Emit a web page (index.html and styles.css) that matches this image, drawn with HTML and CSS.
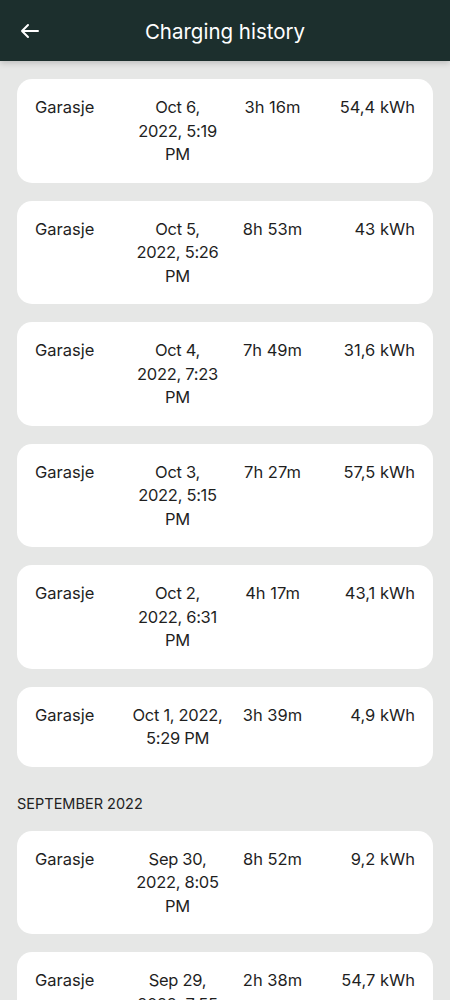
FILE: index.html
```html
<!DOCTYPE html>
<html lang="en">
<head>
  <meta charset="UTF-8">
  <meta name="viewport" content="width=device-width, initial-scale=1.0">
  <title>Charging history</title>
  <link rel="stylesheet" href="styles.css">
</head>
<body>
  <!-- Top bar -->
  <header class="topbar">
    <button class="back" aria-label="Back">
      <svg width="20" height="16" viewBox="0 0 20 16" fill="none" stroke="#fff" stroke-width="2" stroke-linecap="round" stroke-linejoin="round">
        <path d="M18 8H2M8 2L2 8l6 6"/>
      </svg>
    </button>
    <h1>Charging history</h1>
  </header>

  <!-- Sessions list -->
  <main class="list">
    <div class="session">
      <span class="place">Garasje</span>
      <span class="date">Oct 6,<br>2022, 5:19<br>PM</span>
      <span class="time">3h 16m</span>
      <span class="energy">54,4 kWh</span>
    </div>
    <div class="session">
      <span class="place">Garasje</span>
      <span class="date">Oct 5,<br>2022, 5:26<br>PM</span>
      <span class="time">8h 53m</span>
      <span class="energy">43 kWh</span>
    </div>
    <div class="session">
      <span class="place">Garasje</span>
      <span class="date">Oct 4,<br>2022, 7:23<br>PM</span>
      <span class="time">7h 49m</span>
      <span class="energy">31,6 kWh</span>
    </div>
    <div class="session">
      <span class="place">Garasje</span>
      <span class="date">Oct 3,<br>2022, 5:15<br>PM</span>
      <span class="time">7h 27m</span>
      <span class="energy">57,5 kWh</span>
    </div>
    <div class="session">
      <span class="place">Garasje</span>
      <span class="date">Oct 2,<br>2022, 6:31<br>PM</span>
      <span class="time">4h 17m</span>
      <span class="energy">43,1 kWh</span>
    </div>
    <div class="session">
      <span class="place">Garasje</span>
      <span class="date">Oct 1, 2022,<br>5:29 PM</span>
      <span class="time">3h 39m</span>
      <span class="energy">4,9 kWh</span>
    </div>

    <h2 class="month">SEPTEMBER 2022</h2>

    <div class="session">
      <span class="place">Garasje</span>
      <span class="date">Sep 30,<br>2022, 8:05<br>PM</span>
      <span class="time">8h 52m</span>
      <span class="energy">9,2 kWh</span>
    </div>
    <div class="session">
      <span class="place">Garasje</span>
      <span class="date">Sep 29,<br>2022, 7:55<br>PM</span>
      <span class="time">2h 38m</span>
      <span class="energy">54,7 kWh</span>
    </div>
  </main>
</body>
</html>
```

FILE: styles.css
```css
/* Base */
body {
  margin: 0;
  background: #e6e7e6;
  font-family: 'Inter', 'Roboto', sans-serif;
  color: #1f1f1f;
  height: 1000px;
  overflow: hidden;
}

/* Top bar */
.topbar {
  height: 61px;
  background: #1c2f2d;
  display: flex;
  align-items: center;
  justify-content: center;
  position: relative;
  box-shadow: 0 2px 6px rgba(0, 0, 0, 0.18);
}

.topbar h1 {
  margin: 0 0 -2px;
  font-size: 20.5px;
  font-weight: 400;
  color: #fff;
}

.back {
  position: absolute;
  left: 12px;
  top: 15px;
  width: 36px;
  height: 32px;
  padding: 0;
  border: none;
  background: none;
  display: flex;
  align-items: center;
  justify-content: center;
}

/* List */
.list {
  padding: 18px 17px;
  display: flex;
  flex-direction: column;
  gap: 18px;
}

.session {
  background: #fff;
  border-radius: 15px;
  padding: 17px 18px 16px;
  display: grid;
  grid-template-columns: repeat(4, 1fr);
  align-items: start;
  font-size: 16.5px;
  line-height: 23.5px;
}

.date,
.time {
  text-align: center;
  white-space: nowrap;
}

.date {
  letter-spacing: -0.3px;
}

.energy {
  text-align: right;
}

.month {
  margin: 9px 0 -1px;
  font-size: 14.5px;
  font-weight: 400;
  line-height: 20px;
  color: #222;
}
```
